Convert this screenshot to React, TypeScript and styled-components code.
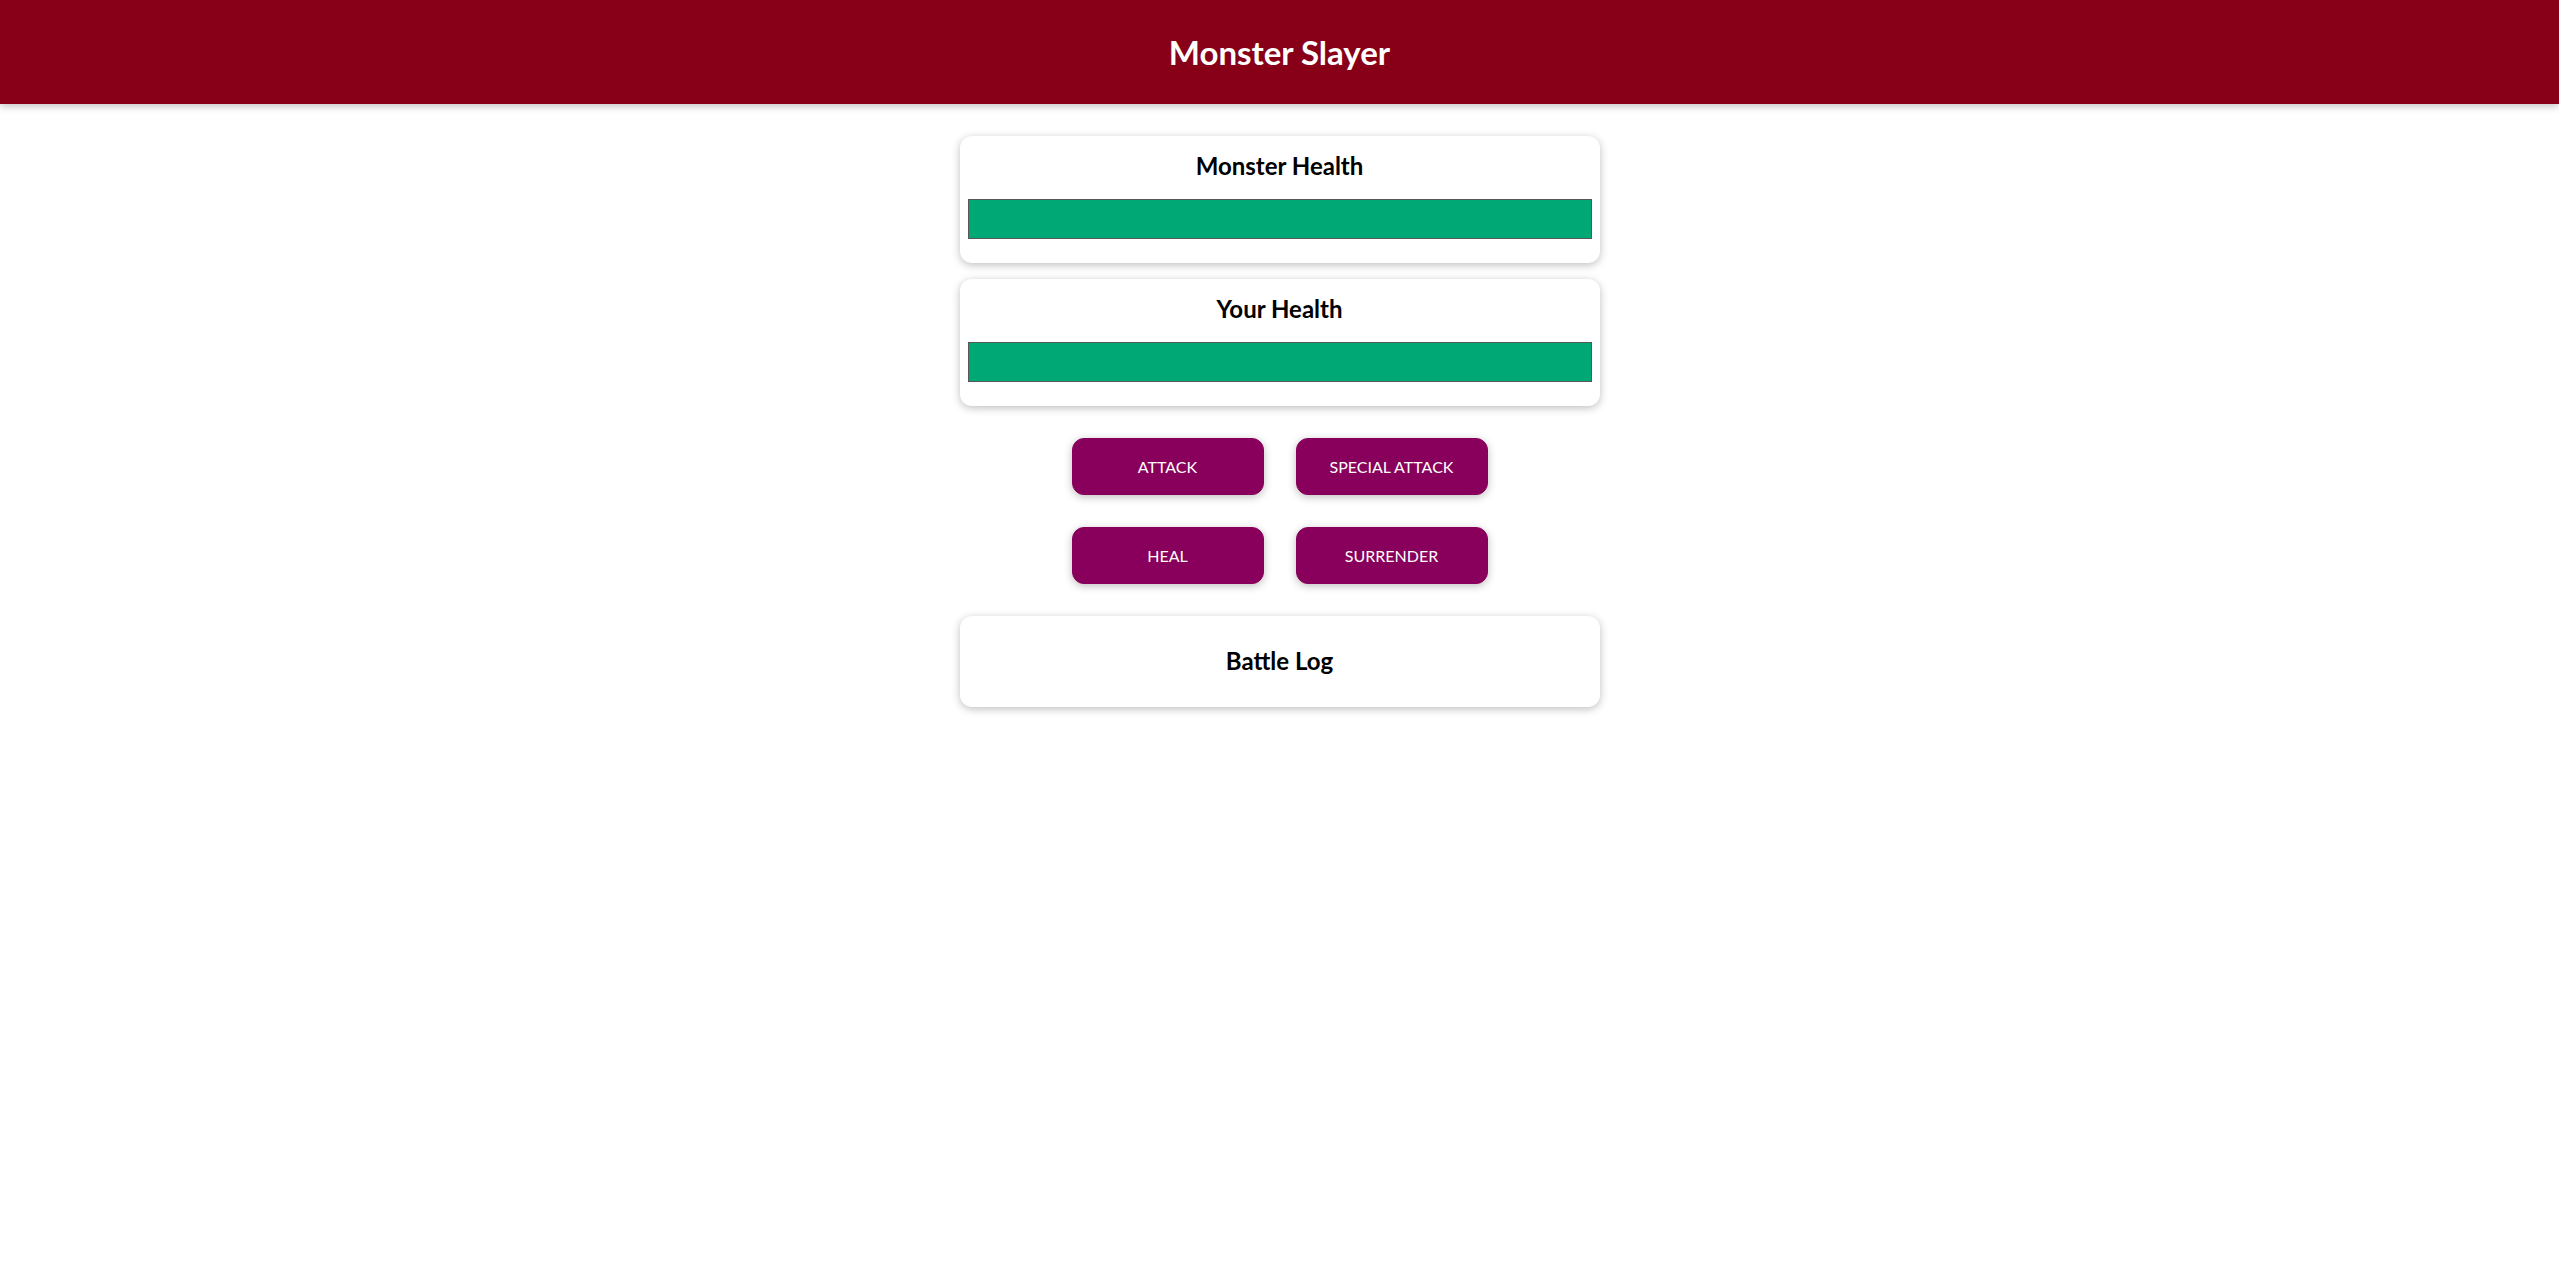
import React from "react";
import styled, { createGlobalStyle } from "styled-components";

const GlobalStyle = createGlobalStyle`
  html { font-family: Lato, "Noto Sans", sans-serif; }
  body { margin: 0; background: #ffffff; color: #000000; }
  * { box-sizing: border-box; }
`;

const Header = styled.header`
  height: 104px;
  display: flex;
  align-items: center;
  justify-content: center;
  background-color: #880017;
  color: #ffffff;
  box-shadow: 0 2px 8px rgba(0, 0, 0, 0.26);
  margin-bottom: 32px;
`;

const Title = styled.h1`
  margin: 0;
  font-size: 33px;
  font-weight: 700;
  line-height: 40px;
`;

const Main = styled.main`
  display: flex;
  flex-direction: column;
  align-items: center;
`;

const Card = styled.section`
  width: 640px;
  padding: 8px;
  border-radius: 12px;
  background: #ffffff;
  box-shadow: 0 2px 8px rgba(0, 0, 0, 0.26);
  text-align: center;
  margin: 0 0 16px;
`;

const CardTitle = styled.h2<{ $log?: boolean }>`
  margin: ${(p) => (p.$log ? "21px 0 22px" : "6px 0 17px")};
  font-size: 24px;
  font-weight: 700;
  line-height: 32px;
`;

const HealthBar = styled.div`
  width: 100%;
  height: 40px;
  border: 1px solid #575757;
  background: #fde5e5;
  margin-bottom: 16px;
`;

const HealthValue = styled.div`
  height: 100%;
  background-color: #00a876;
`;

const Controls = styled.section`
  width: 640px;
  display: flex;
  flex-wrap: wrap;
  justify-content: center;
  padding: 16px 96px;
  margin-bottom: 16px;
  gap: 32px;
`;

const ActionButton = styled.button`
  font-family: inherit;
  font-size: 16px;
  width: 192px;
  height: 57px;
  border: 1px solid #88005b;
  background-color: #88005b;
  color: #ffffff;
  border-radius: 12px;
  box-shadow: 0 2px 8px rgba(0, 0, 0, 0.26);
  text-transform: uppercase;
  cursor: pointer;
`;

const Health = ({ title, value }: { title: string; value: number }) => (
  <Card>
    <CardTitle>{title}</CardTitle>
    <HealthBar>
      <HealthValue style={{ width: `${value}%` }} />
    </HealthBar>
  </Card>
);

export default function App() {
  return (
    <>
      <GlobalStyle />
      <Header>
        <Title>Monster Slayer</Title>
      </Header>
      <Main>
        <Health title="Monster Health" value={100} />
        <Health title="Your Health" value={100} />
        <Controls>
          <ActionButton>Attack</ActionButton>
          <ActionButton>Special Attack</ActionButton>
          <ActionButton>Heal</ActionButton>
          <ActionButton>Surrender</ActionButton>
        </Controls>
        <Card>
          <CardTitle $log>Battle Log</CardTitle>
        </Card>
      </Main>
    </>
  );
}
